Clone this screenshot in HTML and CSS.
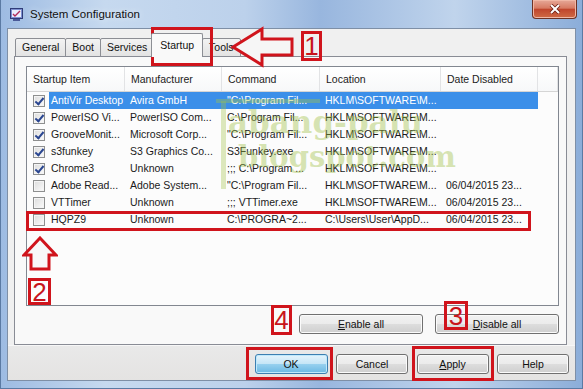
FILE: index.html
```html
<!DOCTYPE html>
<html>
<head>
    <meta charset="UTF-8">
    <title>System Configuration</title>
    <link rel="stylesheet" href="styles.css">
</head>
<body>
<div class="window">
    <div class="titlebar">
        <svg class="appicon" width="13" height="13" viewBox="0 0 13 13">
            <rect x="0.5" y="0.5" width="12" height="10" fill="#7d8fd0" stroke="#2f3c78"/>
            <rect x="2" y="2" width="9" height="7" fill="#e9eefc"/>
            <path d="M3 6 L5 8 L10 3" stroke="#b02a5a" stroke-width="1.4" fill="none"/>
            <rect x="3" y="11" width="7" height="2" fill="#4a5a98"/>
        </svg>
        <span class="title">System Configuration</span>
        <div class="close">
            <svg width="14" height="10" viewBox="0 0 14 10">
                <path d="M3 1 L11 9 M11 1 L3 9" stroke="#6b1f14" stroke-width="3.6"/>
                <path d="M3 1 L11 9 M11 1 L3 9" stroke="#fff" stroke-width="2"/>
            </svg>
        </div>
    </div>

    <div class="client">
        <div class="tabs">
            <div class="tab">General</div>
            <div class="tab">Boot</div>
            <div class="tab">Services</div>
            <div class="tab sel">Startup</div>
            <div class="tab">Tools</div>
        </div>

        <div class="panel">
            <div class="list">
                <div class="row head">
                    <div>Startup Item</div>
                    <div>Manufacturer</div>
                    <div>Command</div>
                    <div>Location</div>
                    <div>Date Disabled</div>
                    <div></div>
                </div>
                <div class="row sel">
                    <div class="item"><span class="cb on"></span><span class="lbl">AntiVir Desktop</span></div>
                    <div>Avira GmbH</div>
                    <div>"C:\Program Fil...</div>
                    <div>HKLM\SOFTWARE\M...</div>
                    <div></div>
                    <div></div>
                </div>
                <div class="row">
                    <div class="item"><span class="cb on"></span><span class="lbl">PowerISO Vi...</span></div>
                    <div>PowerISO Com...</div>
                    <div>C:\Program Fil...</div>
                    <div>HKLM\SOFTWARE\M...</div>
                    <div></div>
                    <div></div>
                </div>
                <div class="row">
                    <div class="item"><span class="cb on"></span><span class="lbl">GrooveMonit...</span></div>
                    <div>Microsoft Corp...</div>
                    <div>"C:\Program Fil...</div>
                    <div>HKLM\SOFTWARE\M...</div>
                    <div></div>
                    <div></div>
                </div>
                <div class="row">
                    <div class="item"><span class="cb on"></span><span class="lbl">s3funkey</span></div>
                    <div>S3 Graphics Co...</div>
                    <div>S3Funkey.exe</div>
                    <div>HKLM\SOFTWARE\M...</div>
                    <div></div>
                    <div></div>
                </div>
                <div class="row">
                    <div class="item"><span class="cb on"></span><span class="lbl">Chrome3</span></div>
                    <div>Unknown</div>
                    <div>;;; C:\Program ...</div>
                    <div>HKLM\SOFTWARE\M...</div>
                    <div></div>
                    <div></div>
                </div>
                <div class="row">
                    <div class="item"><span class="cb"></span><span class="lbl">Adobe Read...</span></div>
                    <div>Adobe System...</div>
                    <div>"C:\Program Fil...</div>
                    <div>HKLM\SOFTWARE\M...</div>
                    <div>06/04/2015 23...</div>
                    <div></div>
                </div>
                <div class="row">
                    <div class="item"><span class="cb"></span><span class="lbl">VTTimer</span></div>
                    <div>Unknown</div>
                    <div>;;; VTTimer.exe</div>
                    <div>HKLM\SOFTWARE\M...</div>
                    <div>06/04/2015 23...</div>
                    <div></div>
                </div>
                <div class="row">
                    <div class="item"><span class="cb"></span><span class="lbl">HQPZ9</span></div>
                    <div>Unknown</div>
                    <div>C:\PROGRA~2...</div>
                    <div>C:\Users\User\AppD...</div>
                    <div>06/04/2015 23...</div>
                    <div></div>
                </div>
            </div>
            <div class="panelbtns">
                <button class="btn wide"><u>E</u>nable all</button>
                <button class="btn wide"><u>D</u>isable all</button>
            </div>
        </div>

        <div class="footer">
            <button class="btn def">OK</button>
            <button class="btn">Cancel</button>
            <button class="btn"><u>A</u>pply</button>
            <button class="btn">Help</button>
        </div>
    </div>

    <!-- watermark -->
    <div class="wm">
        <div class="wm-bar"></div>
        <div class="wm-post"></div>
        <div class="wm-t1">abang-palu</div>
        <div class="wm-t2">blogspot.com</div>
    </div>

    <!-- red annotations -->
    <div class="mark m-tab"></div>
    <div class="mark m-row"></div>
    <div class="mark m-ok"></div>
    <div class="mark m-apply"></div>

    <svg class="arrow a-left" width="68" height="42" viewBox="0 0 68 42">
        <polygon points="5,21 34,3 34,13 64,13 64,29 34,29 34,39" fill="#f6f6f6" stroke="#d0141c" stroke-width="3"/>
    </svg>
    <svg class="arrow a-up" width="36" height="36" viewBox="0 0 36 36">
        <polygon points="18,2 34,19 27,19 27,33 9,33 9,19 2,19" fill="#f8f8f8" stroke="#d0141c" stroke-width="3"/>
    </svg>

    <div class="num n1">1</div>
    <div class="num n2">2</div>
    <div class="num n3">3</div>
    <div class="num n4">4</div>
</div>
</body>
</html>
```

FILE: styles.css
```css
*{
    box-sizing:border-box;
}
body{
    margin:0;
    font-family:"Liberation Sans", Arial, sans-serif;
    background:#a8c2e4;
}
.window{
    position:relative;
    width:583px;
    height:389px;
    overflow:hidden;
    padding:0 7px 8px;
    display:flex;
    flex-direction:column;
    background:linear-gradient(to right, #9dbbe2, #c6d9ef 18%, #bcd1eb 42%, #98b6de 55%, #c0d4ec 78%, #8badd9);
    box-shadow:inset 1px 0 0 #5b7aa3, inset -1px 0 0 #5b7aa3, inset 0 -1px 0 #5b7aa3;
}

/* title bar */
.titlebar{
    height:28px;
    display:flex;
    align-items:center;
}
.appicon{
    margin:0 7px 0 3px;
}
.title{
    font-size:11.5px;
    color:#111;
    text-shadow:0 0 6px #e8f0fa;
}
.close{
    margin-left:auto;
    margin-right:-1px;
    align-self:flex-start;
    width:45px;
    height:19px;
    border:1px solid #6d3326;
    border-top:none;
    border-radius:0 0 4px 4px;
    background:linear-gradient(#e6a898, #d77b63 45%, #c0462d 52%, #cf6b45);
    box-shadow:inset 0 0 0 1px #f0b7a5;
    display:flex;
    align-items:center;
    justify-content:center;
}

/* client area */
.client{
    flex:1;
    display:flex;
    flex-direction:column;
    background:#f0f0f0;
    border:1px solid #7e8fa6;
}
.tabs{
    display:flex;
    align-items:flex-end;
    height:24px;
    margin:4px 0 -1px 7px;
}
.tab{
    height:19px;
    padding:0 6px;
    margin-right:-1px;
    border:1px solid #8c8e94;
    border-radius:2px 2px 0 0;
    background:linear-gradient(#f3f3f3, #e3e3e3);
    font-size:10.5px;
    line-height:17px;
    color:#111;
}
.tab.sel{
    position:relative;
    z-index:1;
    height:24px;
    margin:0 -1px 0 -2px;
    padding:0 8px;
    border-bottom:none;
    background:#f9f9f9;
    line-height:22px;
}
.panel{
    height:289px;
    margin:0 8px 0 6px;
    padding:9px 7px 0 11px;
    border:1px solid #898c95;
    background:#f9f9f9;
}

/* list view */
.list{
    height:240px;
    border:1px solid #828790;
    background:#fcfcfc;
    font-size:10.5px;
    color:#1a1a1a;
}
.row{
    display:grid;
    grid-template-columns:98px 97px 98px 121px 97px 1fr;
    height:17px;
    line-height:17px;
}
.row>div{
    white-space:nowrap;
    overflow:hidden;
    padding-left:5px;
}
.row.head{
    height:25px;
    line-height:24px;
    border-bottom:1px solid #d5d5d5;
    background:linear-gradient(#ffffff, #f7f8f9);
    color:#222;
}
.row.head>div{
    padding-left:6px;
    border-right:1px solid #e2e3e5;
}
.row>.item{
    display:flex;
    align-items:center;
    padding-left:6px;
}
.cb{
    position:relative;
    flex:none;
    width:12px;
    height:12px;
    border:1px solid #8e8f8f;
    background:linear-gradient(135deg, #dcdcdc, #fbfbfb);
    box-shadow:inset 0 0 0 1px #f4f4f4;
}
.cb.on::after{
    content:'';
    position:absolute;
    left:3px;
    top:0;
    width:3px;
    height:7px;
    border:solid #2a4690;
    border-width:0 2px 2px 0;
    transform:rotate(40deg);
}
.lbl{
    flex:1;
    margin-left:4px;
    padding-left:2px;
    height:17px;
}
.row.sel .lbl,
.row.sel>div:nth-child(2),
.row.sel>div:nth-child(3),
.row.sel>div:nth-child(4),
.row.sel>div:nth-child(5){
    background:#3b8fe9;
    color:#fff;
}

/* buttons */
.btn{
    height:20px;
    padding:0;
    border:1px solid #707070;
    border-radius:3px;
    background:linear-gradient(#f2f2f2, #ebebeb 50%, #dddddd 50%, #cfcfcf);
    box-shadow:inset 0 0 0 1px #fbfbfb;
    font-family:"Liberation Sans", Arial, sans-serif;
    font-size:10.5px;
    color:#111;
    width:72px;
}
.btn.wide{
    width:124px;
}
.btn.def{
    width:73px;
    border-color:#3c7fb1;
    background:linear-gradient(#e5f4fc, #c4e5f6 50%, #98d1ef 50%, #6ab8e3);
    box-shadow:inset 0 0 0 1px #bfe9fc;
}
.panelbtns{
    display:flex;
    justify-content:flex-end;
    gap:12px;
    margin-top:8px;
}
.footer{
    height:35px;
    display:flex;
    justify-content:flex-end;
    gap:8.5px;
    padding:8px 6px 0 0;
    background:linear-gradient(#e9e9e9, #e4e3e2);
    border-top:1px solid #f7f7f7;
}

/* watermark */
.wm{
    position:absolute;
    left:214px;
    top:96px;
    width:200px;
    height:96px;
    pointer-events:none;
    color:rgba(160,192,70,0.42);
    font-family:"DejaVu Serif", serif;
    font-weight:bold;
    white-space:nowrap;
}
.wm-bar{
    position:absolute;
    left:2px;
    top:3px;
    width:104px;
    height:4px;
    background:rgba(160,192,70,0.4);
}
.wm-post{
    position:absolute;
    left:7px;
    top:5px;
    width:5px;
    height:88px;
    background:rgba(160,192,70,0.35);
}
.wm-t1{
    position:absolute;
    left:14px;
    top:8px;
    font-size:31px;
}
.wm-t2{
    position:absolute;
    left:24px;
    top:44px;
    font-size:29px;
}

/* annotations */
.mark{
    position:absolute;
    border:3px solid #d0141c;
}
.m-tab{
    left:151px;
    top:27px;
    width:62px;
    height:39px;
}
.m-row{
    left:26px;
    top:211px;
    width:505px;
    height:20px;
}
.m-ok{
    left:246px;
    top:347px;
    width:87px;
    height:33px;
}
.m-apply{
    left:412px;
    top:346px;
    width:82px;
    height:35px;
}
.arrow{
    position:absolute;
}
.a-left{
    left:228px;
    top:26px;
}
.a-up{
    left:22px;
    top:236px;
}
.num{
    position:absolute;
    border:3px solid #d0141c;
    color:#c8141c;
    font-size:26px;
    text-align:center;
    font-family:"Liberation Sans", Arial, sans-serif;
}
.n1{
    left:301px;
    top:31px;
    width:21px;
    height:30px;
    line-height:25px;
}
.n2{
    left:28px;
    top:278px;
    width:23px;
    height:27px;
    line-height:22px;
}
.n3{
    left:444px;
    top:301px;
    width:24px;
    height:29px;
    line-height:24px;
}
.n4{
    left:271px;
    top:305px;
    width:21px;
    height:30px;
    line-height:25px;
}
```
